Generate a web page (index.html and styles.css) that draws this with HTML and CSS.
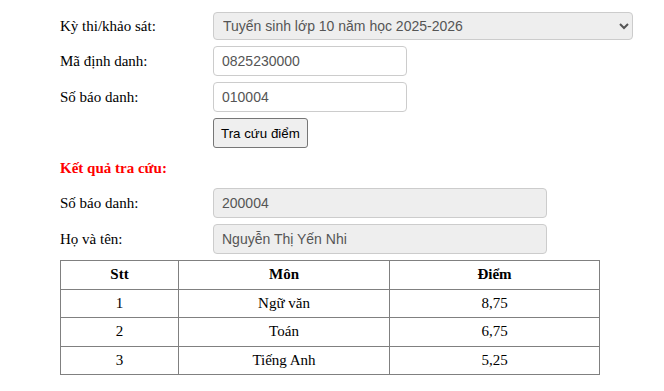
FILE: index.html
```html
<!DOCTYPE html>
<html lang="vi">
<head>
<meta charset="utf-8">
<title>Tra cứu điểm</title>
<link rel="stylesheet" href="styles.css">
</head>
<body>
<div class="page">
  <form class="form">
    <div class="row">
      <label class="label">Kỳ thi/khảo sát:</label>
      <select class="select">
        <option>Tuyển sinh lớp 10 năm học 2025-2026</option>
      </select>
    </div>
    <div class="row">
      <label class="label">Mã định danh:</label>
      <input class="input" type="text" value="0825230000">
    </div>
    <div class="row">
      <label class="label">Số báo danh:</label>
      <input class="input" type="text" value="010004">
    </div>
    <div class="row">
      <span class="label"></span>
      <button class="button" type="button">Tra cứu điểm</button>
    </div>
  </form>

  <h3 class="result-title">Kết quả tra cứu:</h3>

  <div class="result">
    <div class="row">
      <label class="label">Số báo danh:</label>
      <input class="input readonly" type="text" value="200004" readonly>
    </div>
    <div class="row">
      <label class="label">Họ và tên:</label>
      <input class="input readonly" type="text" value="Nguyễn Thị Yến Nhi" readonly>
    </div>
  </div>

  <table class="scores">
    <thead>
      <tr><th class="c1">Stt</th><th class="c2">Môn</th><th class="c3">Điểm</th></tr>
    </thead>
    <tbody>
      <tr><td>1</td><td>Ngữ văn</td><td>8,75</td></tr>
      <tr><td>2</td><td>Toán</td><td>6,75</td></tr>
      <tr><td>3</td><td>Tiếng Anh</td><td>5,25</td></tr>
    </tbody>
  </table>
</div>
</body>
</html>
```
FILE: styles.css
```css
html, body {
  margin: 0;
  padding: 0;
  background: #fff;
}
body {
  font-family: "Liberation Serif", "Times New Roman", serif;
  font-size: 15px;
  color: #000;
}
.page {
  padding: 12px 0 0 60px;
}
.form, .result {
  display: flex;
  flex-direction: column;
  gap: 6px;
}
.row {
  display: flex;
  align-items: center;
}
.label {
  width: 153px;
  flex: none;
}
.select {
  width: 420px;
  height: 28px;
  box-sizing: border-box;
  background: #eeeeee;
  border: 1px solid #cccccc;
  border-radius: 4px;
  padding: 0 5px;
  font-family: "Liberation Sans", Arial, sans-serif;
  font-size: 14px;
  color: #555;
}
.input {
  width: 194px;
  height: 30px;
  box-sizing: border-box;
  border: 1px solid #cccccc;
  border-radius: 4px;
  padding: 0 8px;
  font-family: "Liberation Sans", Arial, sans-serif;
  font-size: 14px;
  color: #555;
  background: #fff;
}
.input.readonly {
  width: 334px;
  background: #eeeeee;
}
.button {
  height: 30px;
  padding: 0 7px;
  box-sizing: border-box;
  font-family: "Liberation Sans", Arial, sans-serif;
  font-size: 13.33px;
  background: #efefef;
  border: 1px solid #767676;
  border-radius: 3px;
  color: #000;
}
.result-title {
  margin: 0;
  padding: 10px 0 10px;
  color: #ff0000;
  font-size: 15px;
  font-weight: bold;
  line-height: 20px;
}
.scores {
  margin-top: 6px;
  border-collapse: collapse;
  width: 540px;
  font-size: 15px;
}
.scores th, .scores td {
  border: 1px solid #808080;
  text-align: center;
  height: 27.5px;
  padding: 0;
}
.c1 { width: 117px; }
.c2 { width: 210px; }
```
